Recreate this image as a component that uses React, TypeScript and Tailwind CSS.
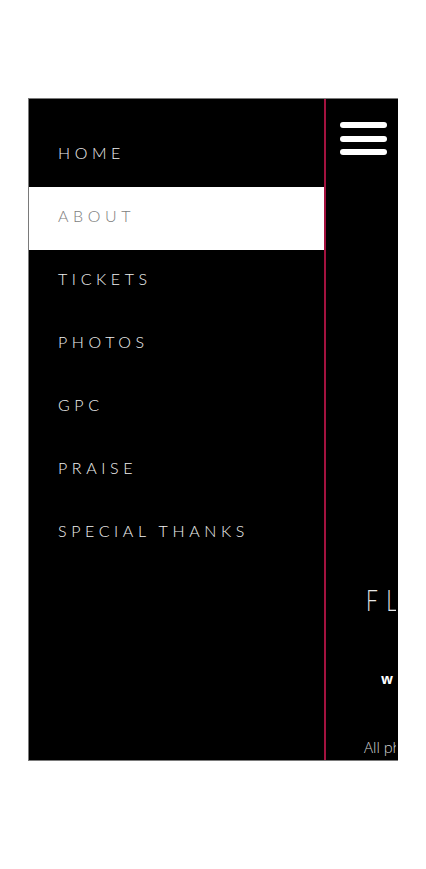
const links = ["HOME", "ABOUT", "TICKETS", "PHOTOS", "GPC", "PRAISE", "SPECIAL THANKS"];

export default function App() {
  const active = "ABOUT";

  return (
    <div className="min-h-screen bg-white pt-[98px] pl-[28px]">
      <div className="flex w-[370px] h-[663px] bg-black border-l border-t border-b border-[#7a7a7a] overflow-hidden">
        {/* Slide-out menu */}
        <nav className="w-[295px] shrink-0 pt-[25px] font-['Lato','Liberation_Sans',sans-serif]">
          {links.map((link) => (
            <a
              key={link}
              href="#"
              className={
                link === active
                  ? "flex items-center h-[63px] pl-[29px] pb-[6px] bg-white text-[#7d7d7d] text-[16px] leading-[20px] font-light tracking-[4.6px]"
                  : "flex items-center h-[63px] pl-[29px] pb-[6px] text-[#f0f0f0] text-[16px] leading-[20px] font-light tracking-[4.6px]"
              }
            >
              {link}
            </a>
          ))}
        </nav>

        {/* Page peeking out on the right */}
        <div className="w-[72px] shrink-0 border-l-2 border-[#a3123f] flex flex-col overflow-hidden">
          <button className="ml-[14px] mt-[23px] w-[47px] flex flex-col gap-[7.5px]">
            <span className="block h-[6px] w-full rounded-full bg-white" />
            <span className="block h-[6px] w-full rounded-full bg-white" />
            <span className="block h-[6px] w-full rounded-full bg-white" />
          </button>

          <div className="mt-[429px] pl-[40px] whitespace-nowrap">
            <div className="origin-left scale-x-[0.7] text-[30px] leading-[30px] font-light tracking-[12px] text-[#e6e6e6] font-['Lato','Liberation_Sans',sans-serif]">
              FLOURISH
            </div>
          </div>

          <div className="mt-[58px] pl-[55px] whitespace-nowrap text-[14px] leading-[14px] font-bold tracking-[4px] text-white font-['Open_Sans','Liberation_Sans',sans-serif]">
            www
          </div>

          <div className="mt-[54px] pl-[38px] whitespace-nowrap text-[15px] leading-[15px] font-light text-[#d0d0d0] font-['Open_Sans','Liberation_Sans',sans-serif]">
            All photos
          </div>
        </div>
      </div>
    </div>
  );
}
